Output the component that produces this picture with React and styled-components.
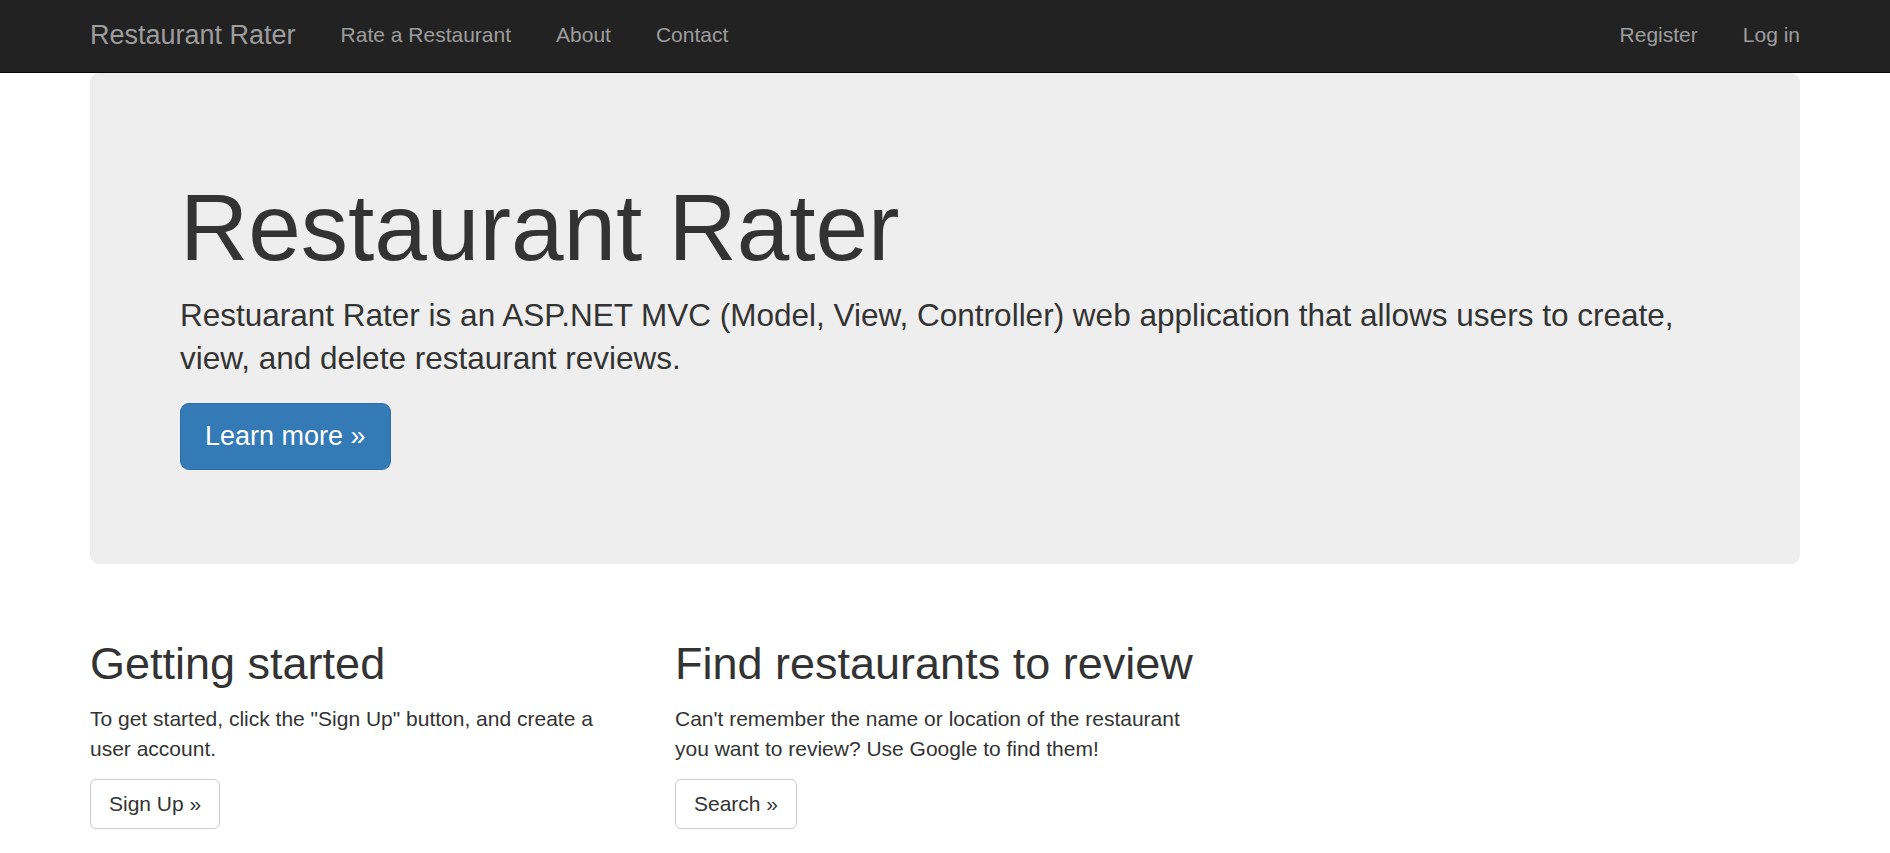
import React from "react";
import styled, { createGlobalStyle } from "styled-components";

const GlobalStyle = createGlobalStyle`
  * {
    box-sizing: border-box;
  }
  body {
    margin: 0;
    background: #fff;
    color: #333;
    font-family: "Liberation Sans", Arial, Helvetica, sans-serif;
    font-size: 21px;
    line-height: 30px;
  }
`;

const Navbar = styled.nav`
  background-color: #222;
  border-bottom: 1px solid #080808;
  height: 73px;
`;

const NavInner = styled.div`
  width: 1755px;
  margin: 0 auto;
  padding: 0 22.5px;
  display: flex;
  align-items: flex-start;
  height: 72px;
`;

const Brand = styled.a`
  margin-left: -22.5px;
  padding: 19.5px 22.5px 0;
  font-size: 27px;
  line-height: 30px;
  color: #9d9d9d;
  text-decoration: none;
`;

const NavList = styled.ul`
  display: flex;
  list-style: none;
  margin: 0;
  margin-right: ${(p) => (p.$right ? "-22.5px" : "0")};
  margin-left: ${(p) => (p.$right ? "auto" : "0")};
  padding: 0;
`;

const NavLink = styled.a`
  display: block;
  padding: 19.5px 22.5px 0;
  font-size: 21px;
  line-height: 30px;
  color: #9d9d9d;
  text-decoration: none;
`;

const Container = styled.main`
  width: 1755px;
  margin: 0 auto;
  padding: 0 22.5px;
`;

const Jumbotron = styled.section`
  background-color: #eee;
  border-radius: 9px;
  padding: 72px 90px;
  margin-bottom: 45px;
`;

const HeroTitle = styled.h1`
  margin: 30px 0 15px;
  font-size: 94.5px;
  line-height: 104px;
  font-weight: 500;
  color: #333;
`;

const Lead = styled.p`
  margin: 0 0 22.5px;
  font-size: 31.5px;
  line-height: 43.4px;
  font-weight: 200;
`;

const ButtonRow = styled.div`
  margin-bottom: 22.5px;
  display: flex;
`;

const Button = styled.a`
  display: inline-block;
  text-decoration: none;
  cursor: pointer;
  border: 1.5px solid ${(p) => (p.$primary ? "#2e6da4" : "#ccc")};
  background-color: ${(p) => (p.$primary ? "#337ab7" : "#fff")};
  color: ${(p) => (p.$primary ? "#fff" : "#333")};
  font-size: ${(p) => (p.$large ? "27px" : "21px")};
  line-height: ${(p) => (p.$large ? "34.4px" : "30px")};
  padding: ${(p) => (p.$large ? "15px 24px" : "9px 18px")};
  border-radius: ${(p) => (p.$large ? "9px" : "6px")};
`;

const Row = styled.div`
  display: grid;
  grid-template-columns: repeat(3, 585px);
  margin: 0 -22.5px;
`;

const Column = styled.div`
  padding: 0 22.5px;
`;

const SectionTitle = styled.h2`
  margin: 30px 0 15px;
  font-size: 45px;
  line-height: 49.5px;
  font-weight: 500;
  color: #333;
`;

const Text = styled.p`
  margin: 0 0 15px;
  font-size: 21px;
  line-height: 30px;
`;

const App = () => {
  return (
    <>
      <GlobalStyle />
      <Navbar>
        <NavInner>
          <Brand href="#">Restaurant Rater</Brand>
          <NavList>
            <li><NavLink href="#">Rate a Restaurant</NavLink></li>
            <li><NavLink href="#">About</NavLink></li>
            <li><NavLink href="#">Contact</NavLink></li>
          </NavList>
          <NavList $right>
            <li><NavLink href="#">Register</NavLink></li>
            <li><NavLink href="#">Log in</NavLink></li>
          </NavList>
        </NavInner>
      </Navbar>
      <Container>
        <Jumbotron>
          <HeroTitle>Restaurant Rater</HeroTitle>
          <Lead>
            Restuarant Rater is an ASP.NET MVC (Model, View, Controller) web
            application that allows users to create, view, and delete
            restaurant reviews.
          </Lead>
          <ButtonRow>
            <Button $primary $large href="#">Learn more &raquo;</Button>
          </ButtonRow>
        </Jumbotron>
        <Row>
          <Column>
            <SectionTitle>Getting started</SectionTitle>
            <Text>
              To get started, click the "Sign Up" button, and create a user
              account.
            </Text>
            <ButtonRow>
              <Button href="#">Sign Up &raquo;</Button>
            </ButtonRow>
          </Column>
          <Column>
            <SectionTitle>Find restaurants to review</SectionTitle>
            <Text>
              Can't remember the name or location of the restaurant you want
              to review? Use Google to find them!
            </Text>
            <ButtonRow>
              <Button href="#">Search &raquo;</Button>
            </ButtonRow>
          </Column>
          <Column />
        </Row>
      </Container>
    </>
  );
};

export default App;
